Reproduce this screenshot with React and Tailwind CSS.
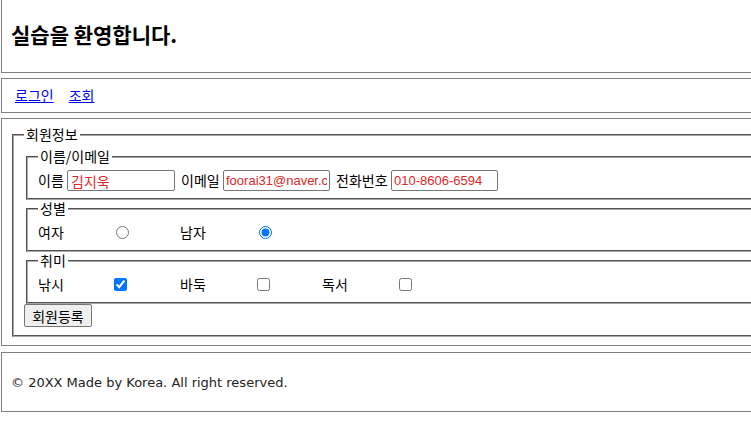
import React from "react";

const fs = "border-2 [border-style:groove] border-[#a8a8a8]";

export default function App() {
  return (
    <div className="w-[751px] h-[438px] overflow-hidden bg-white text-black font-['Noto_Sans_CJK_KR',sans-serif] text-[14px] leading-[17px]">
      <header className="ml-px w-[800px] h-[73px] border-x border-b border-[#808080] flex items-center pl-[9px] pb-[3px]">
        <h1 className="text-[21px] font-bold leading-none">실습을 환영합니다.</h1>
      </header>

      <nav className="ml-px mt-[5px] w-[800px] h-[35px] border border-[#808080] flex items-center pl-[13px] gap-[15px]">
        <a href="#" className="text-[#0000ee] underline">로그인</a>
        <a href="#" className="text-[#0000ee] underline">조회</a>
      </nav>

      <section className="ml-px mt-[5px] w-[800px] border border-[#808080] pl-[10px] pt-[7px] pb-[8px]">
        <fieldset className={`${fs} px-[10px] pt-[5px] pb-[8px]`}>
          <legend className="px-[2px]">회원정보</legend>

          <fieldset className={`${fs} mx-[2px] px-[10px] pt-[5px] pb-[7px]`}>
            <legend className="px-[2px]">이름/이메일</legend>
            <div className="flex items-center h-[21px]">
              <span className="w-[29px]">이름</span>
              <input
                readOnly
                value="김지욱"
                className="w-[108px] h-[21px] border border-[#767676] rounded-[2px] px-[3px] text-[14px] text-[#e02828] font-['Noto_Sans_CJK_KR',sans-serif] outline-none"
              />
              <span className="ml-[6px] w-[42px]">이메일</span>
              <input
                readOnly
                value="foorai31@naver.com"
                className="w-[107px] h-[21px] border border-[#767676] rounded-[2px] px-[2px] text-[13px] text-[#e02828] font-['Liberation_Sans',sans-serif] outline-none"
              />
              <span className="ml-[6px] w-[55px]">전화번호</span>
              <input
                readOnly
                value="010-8606-6594"
                className="w-[107px] h-[21px] border border-[#767676] rounded-[2px] px-[2px] text-[13px] text-[#e02828] font-['Liberation_Sans',sans-serif] outline-none"
              />
            </div>
          </fieldset>

          <fieldset className={`${fs} mx-[2px] px-[10px] pt-[5px] pb-[7px]`}>
            <legend className="px-[2px]">성별</legend>
            <div className="flex items-center h-[21px]">
              <div className="w-[142px] flex items-center">
                <span className="w-[78px]">여자</span>
                <input type="radio" name="g" className="m-0 w-[13px] h-[13px]" />
              </div>
              <div className="w-[142px] flex items-center">
                <span className="w-[79px]">남자</span>
                <input type="radio" name="g" defaultChecked className="m-0 w-[13px] h-[13px]" />
              </div>
            </div>
          </fieldset>

          <fieldset className={`${fs} mx-[2px] px-[10px] pt-[5px] pb-[7px]`}>
            <legend className="px-[2px]">취미</legend>
            <div className="flex items-center h-[21px]">
              <div className="w-[142px] flex items-center">
                <span className="w-[76px]">낚시</span>
                <input type="checkbox" defaultChecked className="m-0 w-[13px] h-[13px]" />
              </div>
              <div className="w-[142px] flex items-center">
                <span className="w-[77px]">바둑</span>
                <input type="checkbox" className="m-0 w-[13px] h-[13px]" />
              </div>
              <div className="w-[142px] flex items-center">
                <span className="w-[77px]">독서</span>
                <input type="checkbox" className="m-0 w-[13px] h-[13px]" />
              </div>
            </div>
          </fieldset>

          <button className="h-[23px] w-[68px] bg-[#efefef] border border-[#767676] rounded-[2px] text-[14px] leading-none">
            회원등록
          </button>
        </fieldset>
      </section>

      <footer className="ml-px mt-[6px] w-[800px] h-[60px] border border-[#808080] flex items-center pl-[9px]">
        <p className="font-['DejaVu_Sans',sans-serif] text-[13px] text-[#222]">© 20XX Made by Korea. All right reserved.</p>
      </footer>
    </div>
  );
}
